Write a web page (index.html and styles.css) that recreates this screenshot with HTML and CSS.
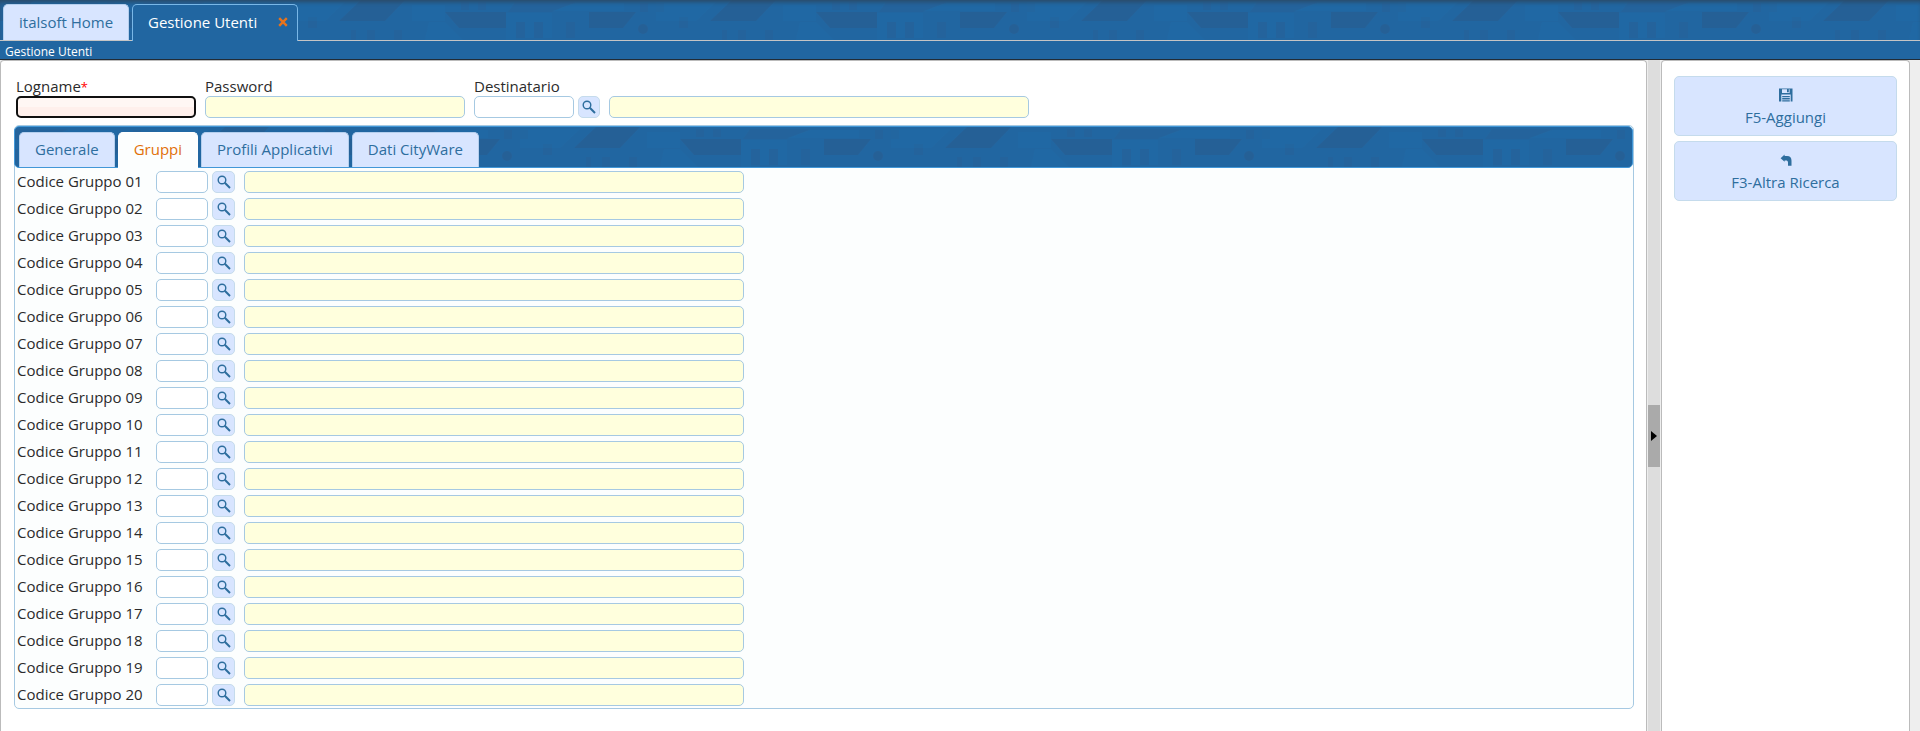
FILE: index.html
```
<!DOCTYPE html>
<html lang="it">
<head>
  <meta charset="UTF-8">
  <meta name="viewport" content="width=device-width, initial-scale=1.0">
  <title>Gestione Utenti</title>
  <link rel="stylesheet" href="styles.css">
</head>
<body>

  <svg class="symbols" aria-hidden="true">
    <symbol id="icon-search" viewBox="0 0 14 14">
      <circle cx="5" cy="5" r="3.8" fill="none" stroke="currentColor" stroke-width="1.4"/>
      <path d="M7.8 7.8 L13 13" stroke="currentColor" stroke-width="2"/>
    </symbol>
  </svg>

  <div class="app-tabs">
    <a class="tab">italsoft Home</a>
    <a class="tab current">Gestione Utenti
      <svg class="close" viewBox="0 0 10 10"><path d="M1.2 1.2 L8.8 8.8 M8.8 1.2 L1.2 8.8"/></svg>
    </a>
  </div>
  <div class="titlebar">Gestione Utenti</div>

  <div class="layout">
    <div class="pane main">
      <form class="head-form">
        <div class="field logname">
          <label for="logname">Logname<span class="req">*</span></label>
          <input type="text" id="logname" class="required">
        </div>
        <div class="field password">
          <label for="password">Password</label>
          <input type="text" id="password" class="readonly" readonly>
        </div>
        <div class="field destinatario">
          <label for="destinatario">Destinatario</label>
          <div class="lookup">
            <input type="text" id="destinatario">
            <button type="button" class="search"><svg><use href="#icon-search"/></svg></button>
            <input type="text" class="readonly decod" readonly>
          </div>
        </div>
      </form>

      <div class="tabs">
        <div class="tabs-nav">
          <a class="tab">Generale</a>
          <a class="tab active">Gruppi</a>
          <a class="tab">Profili Applicativi</a>
          <a class="tab">Dati CityWare</a>
        </div>
        <div class="tabs-panel" id="gruppi"></div>
      </div>
    </div>

    <div class="splitter">
      <div class="toggler"></div>
    </div>

    <div class="pane side">
      <button type="button" class="btn">
        <svg viewBox="0 0 14 14">
          <path fill="currentColor" fill-rule="evenodd" d="M0 0.5 H13.5 V13.5 H11.7 V6.6 H2.3 V13.5 H0 Z M3 1.3 V5 H10.6 V1.3 Z"/>
          <path fill="currentColor" d="M8 1 H9.8 V4.2 H8 Z M3.2 8 H10.8 V9.3 H3.2 Z M3.2 10.1 H10.8 V11.4 H3.2 Z M3.2 12.2 H10.8 V13.5 H3.2 Z"/>
        </svg>
        <span>F5-Aggiungi</span>
      </button>
      <button type="button" class="btn">
        <svg viewBox="0 0 14 14">
          <path fill="currentColor" d="M1.6 5.2 L5.6 1.6 V3 H8 C11.2 3 12.5 5 12.5 7.8 V12.8 H9 V9.6 C9 7.9 8.2 7.4 6.8 7.4 H5.6 V8.8 Z"/>
        </svg>
        <span>F3-Altra Ricerca</span>
      </button>
    </div>
  </div>

  <script>
    const gruppi = document.getElementById('gruppi');
    for (let i = 1; i <= 20; i++) {
      const num = String(i).padStart(2, '0');
      const row = document.createElement('div');
      row.className = 'row';
      row.innerHTML = `<label for="gruppo${num}">Codice Gruppo ${num}</label>
                       <input type="text" id="gruppo${num}" class="codice">
                       <button type="button" class="search"><svg><use href="#icon-search"/></svg></button>
                       <input type="text" class="readonly descrizione" readonly>`;
      gruppi.appendChild(row);
    }
  </script>

</body>
</html>
```
FILE: styles.css
```
* { box-sizing: border-box; }
body { margin: 0; height: 100vh; display: flex; flex-direction: column; overflow: hidden; background-color: #eee; color: #2b2b2b; font-family: "Open Sans", "Noto Sans", sans-serif; font-size: 15px; }
input, button { font-family: inherit; font-size: inherit; margin: 0; padding: 0; }
.symbols { display: none; }

/* house pattern shared by the two tab bars */
.app-tabs, .tabs-nav {
  background-color: #2166a1;
  background-image: url("data:image/svg+xml,%3Csvg xmlns='http://www.w3.org/2000/svg' width='371' height='46'%3E%3Cg fill='%232a5a8c' fill-opacity='.5'%3E%3Cpath d='M83 12H130L117 28H83ZM226 0H270L250 21H204ZM310 12H371V28H324Z'/%3E%3Cpath fill-opacity='.25' d='M9 2H70L46 12H2ZM10 22h9v16h-9zM28 22h9v16h-9zM60 22h9v16h-9zM173 17h9v11h-9zM216 30h5v10h-5zM232 30h8v10h-8zM259 30h8v10h-8zM326 2h8v8h-8zM343 2h8v8h-8zM134 3h8v9h-8zM150 3h8v9h-8z'/%3E%3Ccircle cx='137' cy='29' r='5'/%3E%3C/g%3E%3Cg fill='%231f6fad' fill-opacity='.3'%3E%3Cpath d='M70 3H118V11H46ZM0 13H46V22H0ZM0 22h10v18H0zM19 22h9v16h-9zM37 22h9v16h-9zM150 2H210L190 21H150ZM294 22H310L328 40H290ZM277 5h33v16h-33z'/%3E%3C/g%3E%3C/svg%3E");
}

.tab { display: flex; align-items: center; padding: 0 15px; border: 1px solid #b5cfee; border-bottom: 0; border-radius: 5px 5px 0 0; background-color: #d8e5ff; color: #2e6e9e; white-space: nowrap; }

.app-tabs { flex: none; display: flex; align-items: flex-end; gap: 3px; height: 41px; padding-left: 3px; background-position: 135px 0; border-bottom: 1px solid #c5c5c5; box-shadow: inset 0 4px 4px -2px #2b4a66; }
.app-tabs .tab { width: 126px; height: 36px; padding-bottom: 1px; }
.app-tabs .tab.current { width: 166px; height: 37px; margin-bottom: -1px; padding-bottom: 2px; background-color: #2166a1; border-color: #79b7e7; color: #fff; }
.close { width: 10px; height: 10px; margin-left: auto; margin-right: -6px; fill: none; stroke: #e8731c; stroke-width: 2.4; }

.titlebar { flex: none; height: 19px; padding-left: 5px; background-color: #2166a1; border-bottom: 1px solid #222c36; color: #fff; font-size: 12px; line-height: 21px; }

.layout { flex: 1; display: flex; min-height: 0; }
.pane { background-color: #fff; border: 1px solid #bbb; border-bottom: 0; border-radius: 4px 4px 0 0; }
.main { width: 1647px; padding: 15px 12px 0 13px; }
.splitter { width: 12px; margin: 0 1px; background-color: #ddd; display: flex; flex-direction: column; justify-content: center; }
.toggler { display: flex; align-items: center; justify-content: flex-start; height: 62px; margin-top: 80px; padding-left: 3px; background-color: #aaa; }
.toggler::before { content: ""; border: 5px solid transparent; border-left: 6px solid #000; border-right: 0; }
.side { width: 249px; padding: 15px 12px; display: flex; flex-direction: column; gap: 5px; }

input { height: 22px; border: 1px solid #a6c9e2; border-radius: 5px; background-color: #fff; outline: none; }
.readonly { background-color: #ffffdd; }
.required { border: 2px solid #101010; background: linear-gradient(#fff7f4 50%, #fff0ec 50%); }
.req { color: #f00; font-size: 13px; }
.search { display: flex; align-items: center; justify-content: center; width: 23px; height: 22px; border: 1px solid #c5dbec; border-radius: 5px; background-color: #d8e5ff; color: #2e6e9e; }
.search svg { width: 14px; height: 14px; }

.head-form { display: flex; padding-left: 2px; }
.field { display: flex; flex-direction: column; }
.field label { height: 20px; line-height: 21px; }
.logname { width: 180px; margin-right: 9px; }
.password { width: 260px; margin-right: 9px; }
.lookup { display: flex; }
#destinatario { width: 100px; margin-right: 4px; }
.lookup .search { width: 22px; }
.decod { width: 420px; margin-left: 9px; }

.tabs { width: 1620px; height: 584px; margin-top: 7px; border: 1px solid #a6c9e2; border-radius: 5px; background-color: #fcfefe; }
.tabs-nav { display: flex; align-items: flex-end; gap: 3px; height: 42px; margin-left: -1px; padding-left: 4px; background-position: 355px 0; border: 1px solid #4297d7; border-radius: 5px; }
.tabs-nav .tab { height: 35px; padding-bottom: 2px; }
.tabs-nav .tab.active { height: 36px; margin-bottom: -1px; padding-bottom: 3px; background-color: #fcfefe; border-color: #fff; color: #e17009; }
.tabs-panel { padding: 3px 0 0 2px; }
.row { display: flex; height: 27px; }
.row label { width: 139px; line-height: 21px; }
.codice { width: 52px; margin-right: 4px; }
.descrizione { width: 500px; margin-left: 9px; }

.btn { display: flex; flex-direction: column; align-items: center; justify-content: center; width: 223px; height: 60px; padding-top: 2px; border: 1px solid #c5dbec; border-radius: 5px; background-color: #d8e5ff; color: #2e6e9e; }
.btn svg { width: 14px; height: 14px; margin-bottom: 5px; }
.btn span { line-height: 20px; }
```
